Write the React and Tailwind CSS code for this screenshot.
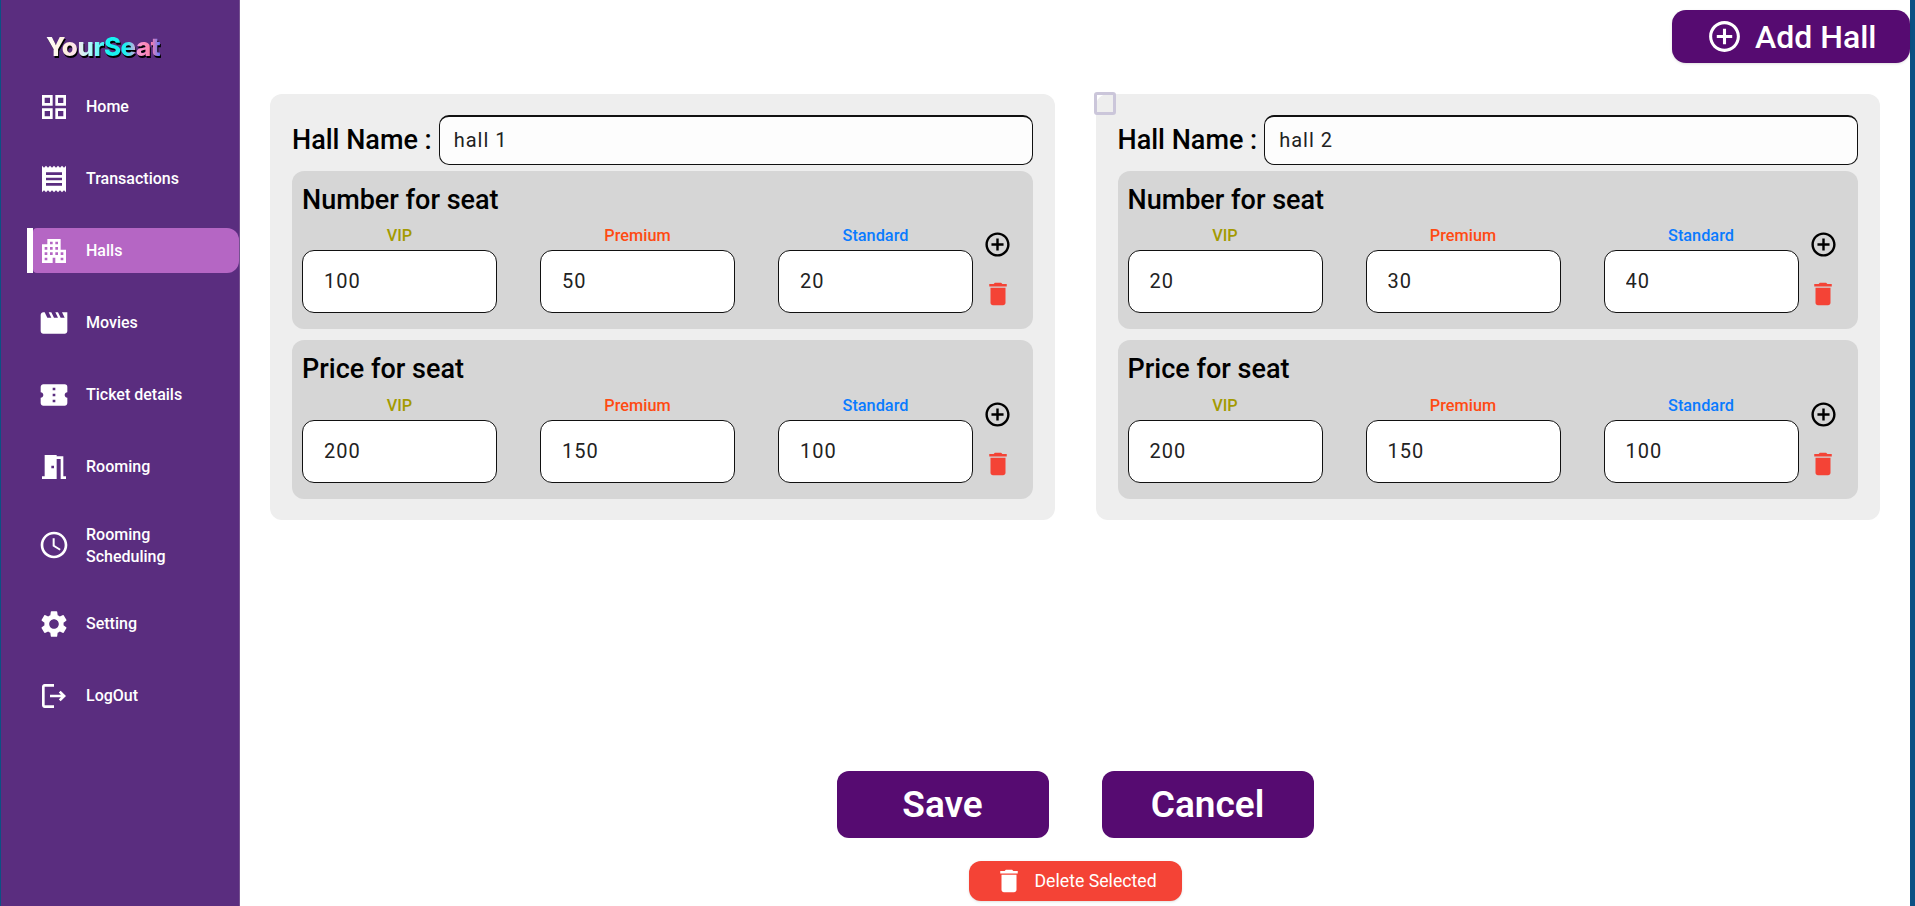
import React from 'react';
import {
  MdOutlineGridView,
  MdReceipt,
  MdApartment,
  MdMovie,
  MdConfirmationNumber,
  MdMeetingRoom,
  MdOutlineAccessTime,
  MdSettings,
  MdOutlineLogout,
  MdAddCircleOutline,
  MdDelete,
} from 'react-icons/md';

const navItems = [
  { label: 'Home', icon: MdOutlineGridView },
  { label: 'Transactions', icon: MdReceipt },
  { label: 'Halls', icon: MdApartment, active: true },
  { label: 'Movies', icon: MdMovie },
  { label: 'Ticket details', icon: MdConfirmationNumber },
  { label: 'Rooming', icon: MdMeetingRoom },
  { label: 'Rooming Scheduling', icon: MdOutlineAccessTime, tall: true },
  { label: 'Setting', icon: MdSettings },
  { label: 'LogOut', icon: MdOutlineLogout },
];

const halls = [
  { name: 'hall 1', seats: ['100', '50', '20'], prices: ['200', '150', '100'] },
  { name: 'hall 2', seats: ['20', '30', '40'], prices: ['200', '150', '100'], checkbox: true },
];

const seatTypes = [
  { label: 'VIP', color: 'text-[#a39a00]' },
  { label: 'Premium', color: 'text-[#ff4a12]' },
  { label: 'Standard', color: 'text-[#0a7bff]' },
];

const Sidebar = () => (
  <aside className="w-[239px] shrink-0 bg-[#5a2d7f] border-r border-[#75528f] flex flex-col">
    <div className="h-[84px] pt-[9px] pl-[45px] flex items-center">
      <span className="font-['Inter',sans-serif] text-[26px] font-extrabold tracking-[-0.5px] text-transparent bg-clip-text bg-[linear-gradient(90deg,#ffffff_0%,#fff3e0_14%,#ffe3ea_26%,#b8fbfb_38%,#14f2f2_55%,#20eef0_70%,#f59ad8_80%,#ff7fa8_92%,#5f7dff_100%)] [filter:drop-shadow(1px_2px_0_#000)]">
        YourSeat
      </span>
    </div>
    <nav className="flex flex-col gap-[27px] pl-[26px]">
      {navItems.map(({ label, icon: Icon, active, tall }) => (
        <div key={label} className={`flex ${tall ? 'h-[58px]' : 'h-[45px]'}`}>
          <div className={`w-[6px] ${active ? 'bg-white' : ''}`} />
          <div className={`flex-1 flex items-center pl-[6px] gap-[17px] rounded-l-[4px] rounded-r-[12px] ${active ? 'bg-[#b566c4]' : ''}`}>
            <span className="w-[30px] flex justify-center shrink-0">
              <Icon size={32} className="text-white shrink-0" />
            </span>
            <span className={`w-[100px] text-white text-[16px] leading-[22px] font-medium ${tall ? 'mt-px' : ''}`}>{label}</span>
          </div>
        </div>
      ))}
    </nav>
  </aside>
);

const SeatSection = ({ title, values, className, rowClass }) => (
  <div className={`bg-[#d6d6d6] rounded-[12px] px-[10px] pt-[13px] pb-[16px] ${className}`}>
    <h3 className="h-[32px] text-[27px] leading-[32px] font-medium text-black">{title}</h3>
    <div className={`flex ${rowClass}`}>
      <div className="flex gap-[43px]">
        {seatTypes.map((type, index) => (
          <div key={type.label} className="w-[195px]">
            <div className={`h-[20px] mb-[4px] text-center text-[16.3px] leading-[20px] font-medium ${type.color}`}>
              {type.label}
            </div>
            <input
              readOnly
              value={values[index]}
              className="w-full h-[63px] pl-[21px] pb-px bg-white border border-[#111] rounded-[12px] text-[20px] tracking-[1px] text-[#222] outline-none"
            />
          </div>
        ))}
      </div>
      <div className="w-[50px] flex flex-col items-center pt-[4px] gap-[20px]">
        <MdAddCircleOutline size={29} className="text-black" />
        <MdDelete size={30} className="text-[#f44336]" />
      </div>
    </div>
  </div>
);

const HallCard = ({ hall }) => (
  <div className="relative bg-[#eeeeee] rounded-[12px] px-[22px] pt-[21px] pb-[21px]">
    {hall.checkbox && (
      <input
        type="checkbox"
        readOnly
        className="absolute -top-[2px] -left-[2px] w-[22px] h-[23px] appearance-none border-[3px] border-[#cbc6da] rounded-[3px]"
      />
    )}
    <div className="flex items-center h-[50px] gap-[7px]">
      <label className="text-[27px] font-medium text-black whitespace-nowrap">Hall Name :</label>
      <input
        readOnly
        value={hall.name}
        className="flex-1 h-[50px] pl-[14px] pb-px bg-[#fdfdfd] border border-[#111] border-t-2 rounded-[10px] text-[20px] tracking-[1px] text-[#222] outline-none"
      />
    </div>
    <SeatSection title="Number for seat" values={hall.seats} className="mt-[6px]" rowClass="mt-[10px]" />
    <SeatSection title="Price for seat" values={hall.prices} className="mt-[11px]" rowClass="mt-[11px]" />
  </div>
);

export default function App() {
  return (
    <div className="flex h-[906px] pl-px pr-[5px] bg-[#0b5184] font-['Roboto',sans-serif] overflow-hidden">
      <Sidebar />
      <main className="flex-1 bg-white flex flex-col">
        <div className="flex justify-end pt-[10px]">
          <button className="w-[238px] h-[53px] pl-[34px] flex items-center gap-[12px] bg-[#560b71] text-white rounded-[14px] shadow-sm">
            <MdAddCircleOutline size={37} className="shrink-0" />
            <span className="text-[32px] font-medium whitespace-nowrap">Add Hall</span>
          </button>
        </div>
        <div className="grid grid-cols-2 gap-[41px] mt-[31px] px-[30px]">
          {halls.map((hall) => (
            <HallCard key={hall.name} hall={hall} />
          ))}
        </div>
        <div className="mt-auto pb-[5px] flex flex-col items-center">
          <div className="flex gap-[53px]">
            <button className="w-[212px] h-[67px] bg-[#560b71] text-white text-[37px] font-semibold rounded-[12px]">Save</button>
            <button className="w-[212px] h-[67px] bg-[#560b71] text-white text-[37px] font-semibold rounded-[12px]">Cancel</button>
          </div>
          <button className="mt-[23px] w-[213px] h-[40px] pl-[25px] flex items-center gap-[11px] bg-[#f44336] text-white text-[17.7px] rounded-[12px] shadow-sm">
            <MdDelete size={30} className="shrink-0" />
            Delete Selected
          </button>
        </div>
      </main>
    </div>
  );
}
